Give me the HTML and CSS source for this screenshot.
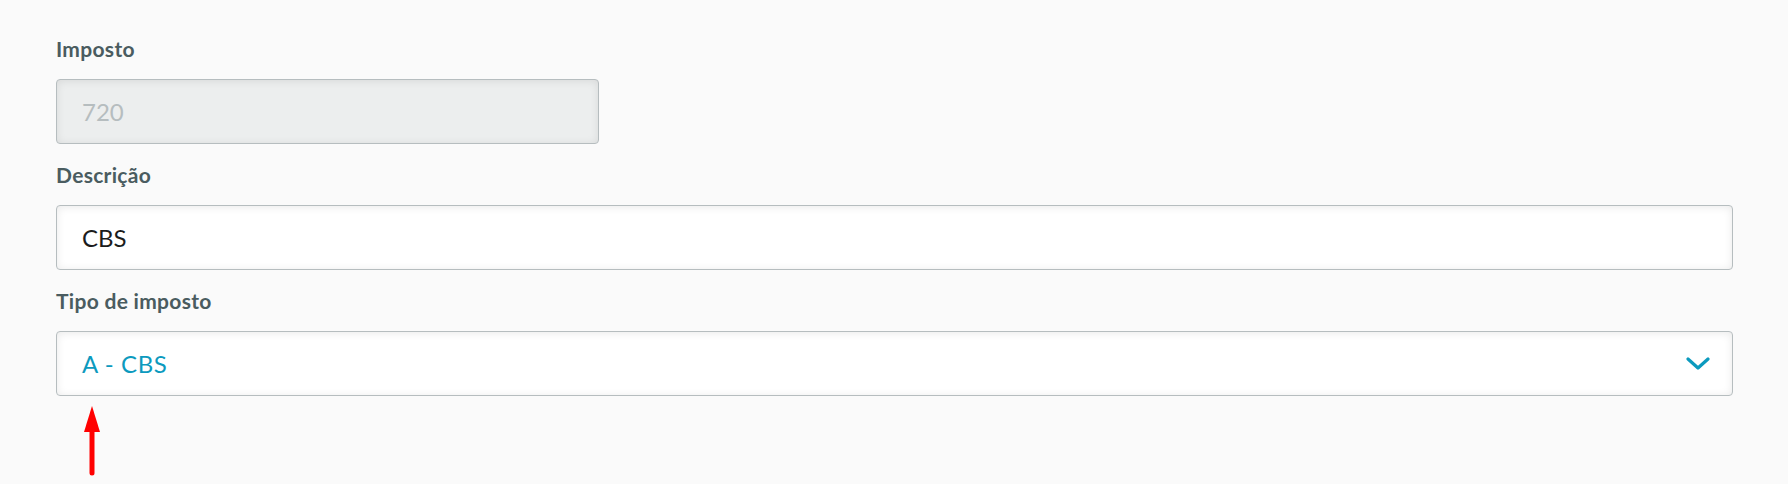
FILE: index.html
```
<!doctype html>
<html>
    <head>
        <title>Imposto</title>
        <link rel="stylesheet" href="styles.css">
    </head>
<body>
    <div class="form">
        <div class="field">
            <label class="field-label" for="imposto">Imposto</label>
            <div class="field-input field-input--disabled field-input--short">
                <span class="field-value">720</span>
            </div>
        </div>

        <div class="field">
            <label class="field-label" for="descricao">Descrição</label>
            <div class="field-input">
                <span class="field-value">CBS</span>
            </div>
        </div>

        <div class="field">
            <label class="field-label" for="tipo">Tipo de imposto</label>
            <div class="field-input field-input--select">
                <span class="field-value">A - CBS</span>
                <svg class="chevron" width="24" height="14" viewBox="0 0 24 14">
                    <path d="M2 2 L12 11 L22 2" fill="none" stroke="#0c9abe" stroke-width="3.2" stroke-linecap="round" stroke-linejoin="round"/>
                </svg>
            </div>
        </div>

        <svg class="pointer" width="20" height="70" viewBox="0 0 20 70">
            <polygon points="10,0 2,26 18,26" fill="#f00"/>
            <line x1="10" y1="22" x2="10" y2="67" stroke="#f00" stroke-width="5" stroke-linecap="round"/>
        </svg>
    </div>
</body>
</html>
```

FILE: styles.css
```
* { margin: 0; padding: 0; box-sizing: border-box; }
body { font: 24px "Lato", "Open Sans", Arial, sans-serif; background-color: #fafafa; height: 100vh; }

.form {
    padding: 34px 55px 0 56px;
    display: flex;
    flex-direction: column;
    gap: 16px;
}

.field {
    display: flex;
    flex-direction: column;
    gap: 15px;
}

.field-label {
    font-size: 21px;
    font-weight: bold;
    line-height: 30px;
    letter-spacing: 0.3px;
    color: #4a5c60;
}

.field-input {
    height: 65px;
    border: 1px solid #b6bdbf;
    border-radius: 4px;
    background-color: #fff;
    box-shadow: inset 0 1px 8px 0 rgba(0, 0, 0, 0.09);
    display: flex;
    align-items: center;
    padding: 0 25px;
}

.field-input--short {
    width: 543px;
}

.field-input--disabled {
    background-color: #eceeee;
    color: #b6bdbf;
}

.field-value {
    font-size: 24px;
    color: #1c1c1c;
}

.field-input--disabled .field-value {
    color: #b6bdbf;
}

.field-input--select {
    justify-content: space-between;
    padding-right: 22px;
}

.field-input--select .field-value {
    color: #0c9abe;
    letter-spacing: 0.6px;
}

.pointer {
    display: block;
    margin-left: 26px;
    margin-top: -6px;
}
```
